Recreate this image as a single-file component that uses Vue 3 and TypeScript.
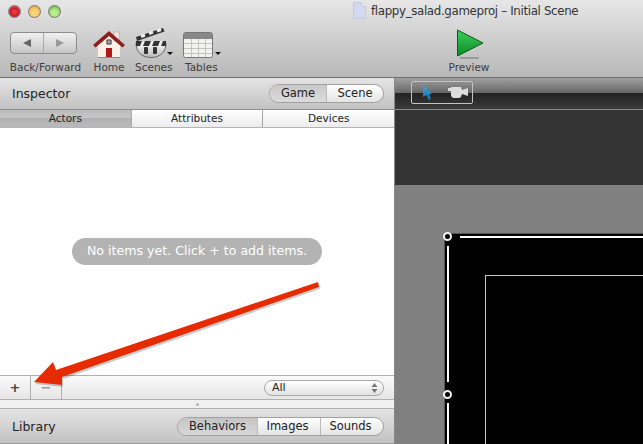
<script setup lang="ts">
const toolbarItems = ['Home', 'Scenes', 'Tables']
const tabs = ['Actors', 'Attributes', 'Devices']
const lib = ['Behaviors', 'Images', 'Sounds']
</script>

<template>
  <div class="win">
    <header class="toolbar">
      <div class="top">
        <div class="lights">
          <i class="light red"></i><i class="light yellow"></i><i class="light green"></i>
        </div>
        <div class="title">
          <svg width="13" height="17" viewBox="0 0 13 17"><path d="M.5.5h8l4 4v12H.5z" fill="#d4d8f0" stroke="#c4c8e0"/><path d="M8.5.5v4h4" fill="#eef0fa" stroke="#c4c8e0"/></svg>
          <span>flappy_salad.gameproj – Initial Scene</span>
        </div>
      </div>
      <div class="tools">
        <div class="tool backfwd">
          <div class="seg">
            <span class="half"><svg width="10" height="10" viewBox="0 0 10 10"><path d="M9 1v8L1 5z" fill="#666"/></svg></span>
            <span class="half"><svg width="10" height="10" viewBox="0 0 10 10"><path d="M1 1v8l8-4z" fill="#999"/></svg></span>
          </div>
          <span class="lbl">Back/Forward</span>
        </div>
        <div class="tool home">
          <svg width="32" height="28" viewBox="0 0 32 28">
            <path d="M5 13 16 3l11 10v14H5z" fill="#fdf0e4"/>
            <rect x="21" y="2" width="5" height="9" fill="#f8ece2" stroke="#a88" stroke-width=".5"/>
            <path d="M0 15 16 1l16 14-2.500 2.500L16 6 2.500 17.500z" fill="#8a2020"/>
            <circle cx="16" cy="12" r="3" fill="#555"/>
            <path d="M13 12h6M16 9v6" stroke="#ddd" stroke-width=".7"/>
            <rect x="13" y="18" width="6" height="9" fill="#b01818"/>
            <path d="M5 27.500h22" stroke="#888"/>
          </svg>
          <span class="lbl">{{ toolbarItems[0] }}</span>
        </div>
        <div class="tool scenes">
          <svg width="38" height="30" viewBox="0 0 38 30">
            <defs><linearGradient id="bw" x1="0" y1="0" x2="0" y2="1"><stop offset="0" stop-color="#fafafa"/><stop offset="1" stop-color="#b8b8b8"/></linearGradient></defs>
            <path d="M1 15h30c0 8-5 14.500-15 14.500S1 23 1 15z" fill="url(#bw)" stroke="#666"/>
            <path d="M1 9 28 0l1.500 3.500L2 13z" fill="#333"/>
            <path d="M6 8.500 10 7M14 5.500l4-1.500M22 3l4-1.500" stroke="#eee" stroke-width="3"/>
            <rect x="1" y="13" width="30" height="5" fill="#333"/>
            <path d="M5 18l2-5h3l-2 5zM14 18l2-5h3l-2 5zM23 18l2-5h3l-2 5z" fill="#eee"/>
            <rect x="9" y="19" width="4" height="7" rx="1" fill="#333"/>
            <rect x="18" y="19" width="4" height="7" rx="1" fill="#333"/>
            <path d="M32 24h6l-3 3z" fill="#111"/>
          </svg>
          <span class="lbl">{{ toolbarItems[1] }}</span>
        </div>
        <div class="tool tables">
          <svg width="38" height="27" viewBox="0 0 38 27">
            <rect x=".5" y="1.500" width="29" height="25" rx="2" fill="#f2f2f0" stroke="#777"/>
            <rect x="1" y="2" width="28" height="6" fill="#888"/>
            <path d="M1 12.500h28M1 17.500h28M1 22.500h28M8.500 8v18M15.500 8v18M22.500 8v18" stroke="#c4c4c4"/>
            <path d="M32 21h6l-3 3z" fill="#111"/>
          </svg>
          <span class="lbl">{{ toolbarItems[2] }}</span>
        </div>
        <div class="tool preview">
          <svg width="30" height="30" viewBox="0 0 30 30">
            <defs><linearGradient id="pg" x1="0" y1="0" x2="0" y2="1"><stop offset="0" stop-color="#3fd060"/><stop offset="1" stop-color="#0a8a20"/></linearGradient></defs>
            <path d="M1.500 1 27 14 1.500 27z" fill="url(#pg)" stroke="#0a5a18"/>
            <path d="M4 29h19" stroke="#999" stroke-width="2"/>
          </svg>
          <span class="lbl">Preview</span>
        </div>
      </div>
    </header>

    <div class="body">
      <section class="left">
        <div class="head">
          <span class="heading">Inspector</span>
          <div class="pill gs">
            <span class="on">Game</span><span>Scene</span>
          </div>
        </div>
        <nav class="tabs">
          <span v-for="(t, i) in tabs" :key="t" class="tab" :class="{ active: i === 0 }">{{ t }}</span>
        </nav>
        <div class="content">
          <div class="empty">No items yet. Click + to add items.</div>
        </div>
        <div class="bar">
          <span class="btn plus">+</span>
          <span class="btn minus">−</span>
          <div class="select"><span>All</span>
            <svg width="7" height="10" viewBox="0 0 7 10"><path d="M3.500 0 6.500 4h-6zM3.500 10 .5 6h6z" fill="#777"/></svg>
          </div>
        </div>
        <div class="grip"><i></i></div>
        <div class="head lib">
          <span class="heading">Library</span>
          <div class="pill libpill">
            <span v-for="(l, i) in lib" :key="l" :class="{ sel: i === 0 }">{{ l }}</span>
          </div>
        </div>
      </section>
      <div class="split"></div>
      <section class="right">
        <div class="rbar">
          <div class="toolbox">
            <svg width="9" height="15" viewBox="0 0 9 15"><defs><linearGradient id="cur" x1="0" y1="0" x2="0" y2="1"><stop offset="0" stop-color="#38a8e8"/><stop offset="1" stop-color="#1670a8"/></linearGradient></defs><path d="M0 0 9 9H6l2 5-3 1-1-5-4 2z" fill="url(#cur)"/></svg>
            <svg width="20" height="11" viewBox="0 0 20 11"><path d="M0 1h3V0h10l1 3 6-2v8l-6-2-1 3-2 1H5L3 9V4H0z" fill="#ddd"/></svg>
          </div>
        </div>
        <div class="dark"></div>
        <div class="stage">
          <div class="scene">
            <div class="inner"></div>
            <i class="edge top-edge"></i>
            <i class="edge left-a"></i>
            <i class="edge left-b"></i>
            <i class="handle h1"></i>
            <i class="handle h2"></i>
          </div>
        </div>
      </section>
    </div>

    <svg class="arrow" width="643" height="444" viewBox="0 0 643 444">
      <path d="M318 282 319 287 62 377 62 385 34 382 53 362 56 370z" fill="#000" opacity=".2" transform="translate(1 2)"/>
      <path d="M318 282 319 287 62 377 62 385 34 382 53 362 56 370z" fill="#e62b00"/>
    </svg>
  </div>
</template>

<style scoped>
.win {
  position: relative; width: 643px; height: 444px; overflow: hidden;
  font-family: "DejaVu Sans", sans-serif; font-size: 11px; color: #222; background: #fff;
  display: flex; flex-direction: column;
}
.toolbar {
  height: 78px; flex: none; box-sizing: border-box;
  background: linear-gradient(#e6e6e6, #b8b8b8); border-bottom: 1px solid #6e6e6e;
  padding-top: 5px;
}
.top { display: flex; height: 14px; }
.lights { display: flex; gap: 7px; padding-left: 8px; align-items: flex-start; }
.light { width: 13px; height: 13px; border-radius: 50%; border: 1px solid #777; box-sizing: border-box; }
.red { background: radial-gradient(circle at 50% 55%, #e8383e 25%, #c8182a 45%, #f08a90 100%); }
.yellow { background: radial-gradient(circle at 50% 65%, #ffd37a 30%, #e09a28 100%); }
.green { background: radial-gradient(circle at 50% 65%, #b6ee8a 30%, #5ca83a 100%); }
.title {
  margin-left: 292px; margin-top: -3px; height: 17px; display: flex; align-items: center; gap: 5px;
  font-size: 11.800px; letter-spacing: -0.33px; color: #333; white-space: nowrap;
}
.tools { display: flex; height: 50px; margin-top: 6px; }
.tool { display: flex; flex-direction: column; align-items: center; justify-content: flex-end; height: 50px; }
.lbl { font-size: 10.500px; color: #3c3c3c; line-height: 13px; white-space: nowrap; height: 13px; margin-bottom: 1px; }
.backfwd { width: 73px; margin-left: 9px; }
.seg {
  width: 67px; height: 22px; box-sizing: border-box; border: 1px solid #8c8c8c; border-radius: 4px; display: flex;
  background: linear-gradient(#f0f0f0, #c6c6c6); margin: 0 4px 7px 0;
}
.half { flex: 1; display: flex; align-items: center; justify-content: center; }
.half + .half { border-left: 1px solid #aaa; }
.home { width: 34px; margin-left: 10px; }
.home svg { margin-bottom: 3px; }
.scenes { width: 40px; margin-left: 9px; align-items: flex-start; }
.scenes svg { margin-bottom: 3px; }
.tables { width: 40px; margin-left: 8px; align-items: flex-start; }
.tables svg { margin-bottom: 3px; }
.tables .lbl { margin-left: 2px; }
.preview { width: 44px; margin-left: 224px; }
.preview svg { margin-bottom: 2px; margin-left: 3px; }
.body { flex: 1; display: flex; min-height: 0; }
.left { width: 394px; flex: none; display: flex; flex-direction: column; height: 366px; }
.split { width: 1px; flex: none; background: #888; }
.head {
  height: 32px; flex: none; box-sizing: border-box; display: flex; align-items: center;
  justify-content: space-between; padding: 0 10px 0 12px;
  background: linear-gradient(#e4e4e4, #c2c2c2); border-bottom: 1px solid #8e8e8e;
}
.heading { font-size: 12.500px; color: #222; }
.pill {
  display: flex; height: 19px; box-sizing: border-box; border: 1px solid #a0a0a0; border-radius: 10px;
  background: linear-gradient(#fff, #e4e4e4); overflow: hidden; font-size: 11.500px; line-height: 17px; color: #222;
}
.gs span { width: 56px; text-align: center; }
.gs span.on { background: linear-gradient(#c8c8c8, #dcdcdc); border-right: 1px solid #bbb; }
.tabs { display: flex; height: 18px; flex: none; box-sizing: border-box; border-bottom: 1px solid #b4b4b4; background: linear-gradient(#fff, #ececec); }
.tab { flex: 1; text-align: center; line-height: 16px; font-size: 10.500px; color: #222; border-left: 1px solid #a8a8a8; }
.tab:first-child { border-left: 0; }
.tab.active { background: linear-gradient(#bcbcbc, #c6c6c6 50%, #b0b0b0 50%, #bababa); }
.content { flex: 1; display: flex; align-items: flex-start; justify-content: center; background: #fff; padding-top: 110px; }
.empty {
  width: 250px; height: 27px; background: #b3b3b3; border-radius: 14px; color: #fff;
  text-align: center; line-height: 26px; font-size: 12.600px; white-space: nowrap;
}
.bar {
  height: 25px; flex: none; box-sizing: border-box; display: flex; align-items: center;
  border-top: 1px solid #b0b0b0; border-bottom: 1px solid #b0b0b0; background: linear-gradient(#fafafa, #e6e6e6);
}
.btn { width: 31px; box-sizing: border-box; height: 100%; display: flex; align-items: center; justify-content: center; border-right: 1px solid #b0b0b0; font-size: 13px; font-weight: 700; color: #444; }
.btn.minus { color: #999; }
.select {
  margin-left: 202px; width: 120px; height: 16px; box-sizing: border-box; border: 1px solid #a8a8a8; border-radius: 8px;
  background: linear-gradient(#fff, #e2e2e2); display: flex; align-items: center; justify-content: space-between; padding: 0 5px 0 7px;
  font-size: 11px; color: #222;
}
.grip { height: 8px; flex: none; background: #f0f0f0; display: flex; justify-content: center; align-items: center; }
.grip i { width: 3px; height: 3px; border-radius: 50%; background: #b4b4b4; }
.head.lib { height: 36px; flex: none; border-top: 1px solid #b0b0b0; border-bottom: 1px solid #9a9a9a; }
.libpill { width: 207px; }
.libpill span { border-left: 1px solid #bbb; text-align: center; width: 63px; box-sizing: border-box; padding-right: 3px; }
.libpill span:first-child { border-left: 0; width: 79px; padding-right: 0; }
.libpill span.sel { background: linear-gradient(#c4c4c4, #d8d8d8); }
.right { flex: 1; display: flex; flex-direction: column; min-width: 0; height: 366px; background: #808080; }
.rbar {
  height: 32px; flex: none; box-sizing: border-box; padding: 3px 0 0 16px;
  background: linear-gradient(#a0a0a0, #686868 46%, #222 46%, #3a3a3a 96%, #8a8a8a 96%);
}
.toolbox {
  width: 62px; height: 23px; box-sizing: border-box; border: 1px solid #c4c4c4; border-radius: 2px;
  display: flex; align-items: center; gap: 16px; padding-left: 11px;
}
.dark { height: 75px; flex: none; background: #333; }
.stage { flex: 1; padding: 49px 0 0 50px; overflow: hidden; min-height: 0; }
.scene {
  position: relative; height: 300px; background: #000; box-shadow: -1px 0 0 #555, 0 -1px 0 #555;
}
.inner { position: absolute; left: 40px; top: 41px; right: -10px; bottom: -10px; border: 1px solid #c8c8c8; }
.edge { position: absolute; background: #fff; }
.top-edge { left: 15px; right: 0; top: 2px; height: 2px; }
.left-a { left: 2px; width: 2px; top: 12px; height: 136px; }
.left-b { left: 2px; width: 2px; top: 169px; bottom: 0; }
.handle {
  position: absolute; width: 9px; height: 9px; box-sizing: border-box; border-radius: 50%;
  border: 2.500px solid #f4f4f4; background: #000;
}
.h1 { left: -2px; top: -2px; }
.h2 { left: -2px; top: 156px; }
.arrow { position: absolute; left: 0; top: 0; pointer-events: none; }
</style>
